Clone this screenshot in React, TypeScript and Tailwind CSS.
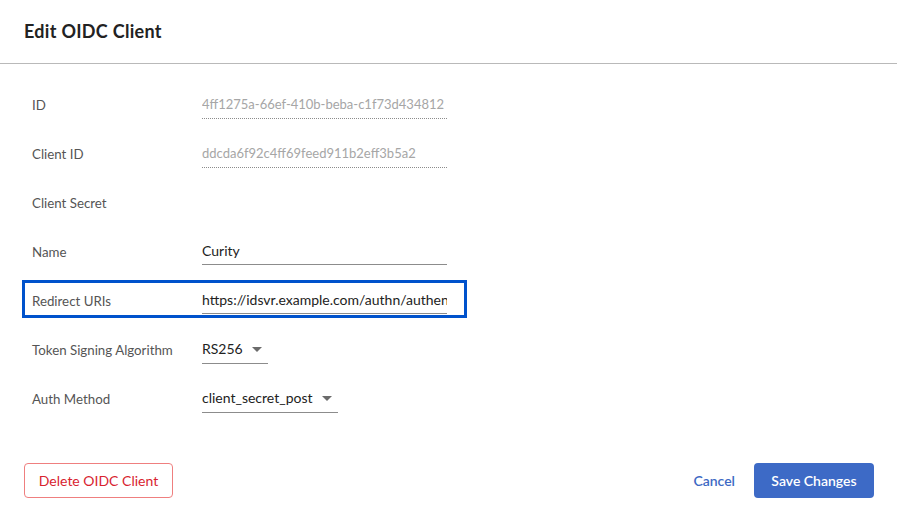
import React from "react";

const font = { fontFamily: "Lato, 'Noto Sans', sans-serif" };

function Caret() {
  return (
    <svg width="10" height="6" viewBox="0 0 10 6" className="ml-[9px] mt-[2px]">
      <path d="M0 0 L10 0 L5 5 Z" fill="#6b6b6b" />
    </svg>
  );
}

type Row = {
  label: string;
  kind: "readonly" | "none" | "input" | "select";
  value?: string;
  highlight?: boolean;
};

const rows: Row[] = [
  { label: "ID", kind: "readonly", value: "4ff1275a-66ef-410b-beba-c1f73d434812" },
  { label: "Client ID", kind: "readonly", value: "ddcda6f92c4ff69feed911b2eff3b5a2" },
  { label: "Client Secret", kind: "none" },
  { label: "Name", kind: "input", value: "Curity" },
  { label: "Redirect URIs", kind: "input", value: "https://idsvr.example.com/authn/authen", highlight: true },
  { label: "Token Signing Algorithm", kind: "select", value: "RS256" },
  { label: "Auth Method", kind: "select", value: "client_secret_post" },
];

export default function App() {
  return (
    <div className="w-[897px] h-[520px] bg-white flex flex-col text-[#333]" style={font}>
      <div className="h-[64px] flex items-center px-[24px] border-b border-[#b9b9b9] shrink-0">
        <h1 className="text-[18px] font-bold text-[#222] tracking-[0.3px]">Edit OIDC Client</h1>
      </div>
      <div className="flex flex-col gap-[11px] pt-[20px] pl-[22px]">
        {rows.map((r) => (
          <div
            key={r.label}
            className={`w-[445px] h-[38px] border-[3px] flex items-end pl-[7px] ${
              r.highlight ? "border-[#0052cc]" : "border-transparent"
            }`}
          >
            <div className="w-[170px] shrink-0 text-[13.3px] leading-5 text-[#555] mb-[4px]">{r.label}</div>
            {r.kind === "readonly" && (
              <div className="w-[245px] overflow-hidden whitespace-nowrap text-[13px] leading-5 text-[#a6a6a6] pb-[4px] border-b border-dotted border-[#8c8c8c]">
                {r.value}
              </div>
            )}
            {r.kind === "input" && (
              <div className="w-[245px] overflow-hidden whitespace-nowrap text-[14px] leading-5 text-[#222] pb-[3px] mb-[1px] border-b border-[#8c8c8c]">
                {r.value}
              </div>
            )}
            {r.kind === "select" && (
              <div className="flex items-center pr-[6px] text-[14px] leading-5 text-[#222] pb-[4px] border-b border-[#8c8c8c]">
                <span>{r.value}</span>
                <Caret />
              </div>
            )}
          </div>
        ))}
      </div>
      <div className="flex items-center justify-between pl-[24px] pr-[23px] mt-[47px]">
        <button className="h-[35px] w-[149px] rounded-[4px] border border-[#ef7f7f] text-[#d8232f] text-[14px]">
          Delete OIDC Client
        </button>
        <div className="flex items-center gap-[19px]">
          <button className="text-[14px] text-[#3d69c4] font-semibold">Cancel</button>
          <button className="h-[35px] w-[120px] rounded-[4px] bg-[#3d6ac6] text-white text-[14px] font-semibold">
            Save Changes
          </button>
        </div>
      </div>
    </div>
  );
}
